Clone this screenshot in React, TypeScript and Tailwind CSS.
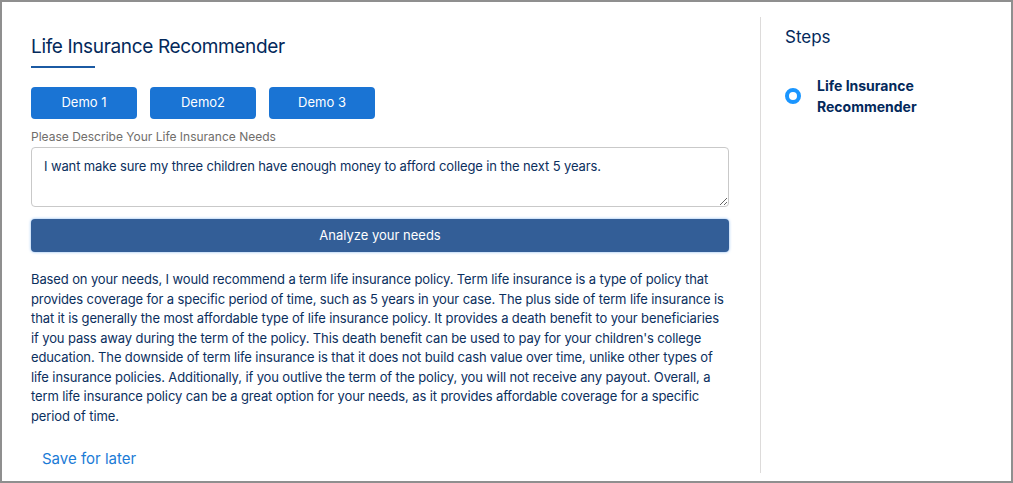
import React, { useState } from "react"

const answer =
    "Based on your needs, I would recommend a term life insurance policy. Term life insurance is a type of policy that provides coverage for a specific period of time, such as 5 years in your case. The plus side of term life insurance is that it is generally the most affordable type of life insurance policy. It provides a death benefit to your beneficiaries if you pass away during the term of the policy. This death benefit can be used to pay for your children's college education. The downside of term life insurance is that it does not build cash value over time, unlike other types of life insurance policies. Additionally, if you outlive the term of the policy, you will not receive any payout. Overall, a term life insurance policy can be a great option for your needs, as it provides affordable coverage for a specific period of time."

const demos = ["Demo 1", "Demo2", "Demo 3"]

const App = () => {
    const [needs, setNeeds] = useState("I want make sure my three children have enough money to afford college in the next 5 years.")

    return (
        <div className="w-[1013px] h-[483px] border-2 border-[#8f8f8f] bg-white flex font-['Inter',sans-serif] text-[#0b2f5e]">
            <div className="w-[758px] pl-[29px] pr-[31px] pt-[31px]">
                <h1 className="text-[19px] leading-[28px] tracking-[-0.35px] text-[#03295b]">Life Insurance Recommender</h1>
                <div className="mt-[5px] h-[2px] w-[64px] bg-[#1b5aa3]" />

                <div className="mt-[19px] flex gap-[13px]">
                    {demos.map((d) => (
                        <button key={d} className="w-[106px] h-[32px] rounded bg-[#1a74d4] text-white text-[13px]">
                            {d}
                        </button>
                    ))}
                </div>

                <label className="block mt-[10px] text-[12px] leading-4 text-[#706e6b]">Please Describe Your Life Insurance Needs</label>
                <textarea
                    value={needs}
                    onChange={(e) => setNeeds(e.target.value)}
                    className="mt-[2px] block w-full h-[60px] rounded border border-[#c9c9c9] px-[12px] pt-[9px] pb-[8px] text-[13px] leading-[19px] tracking-[-0.12px] text-[#0b2f5e] outline-none"
                />

                <button className="mt-3 w-full h-[33px] rounded bg-[#335e97] text-white text-[13px] shadow-[0_0_3px_#7fb2ee]">
                    Analyze your needs
                </button>

                <p className="mt-[18px] text-[13px] leading-[19.5px] tracking-[-0.12px]">{answer}</p>

                <button className="mt-[21px] ml-[11px] text-[15px] leading-6 text-[#1b7bd6]">Save for later</button>
            </div>

            <div className="mt-[15px] h-[456px] flex-1 border-l border-[#dddbda] pl-[24px] pt-[6px]">
                <h2 className="text-[17px] leading-[28px] text-[#03295b]">Steps</h2>
                <div className="mt-[24px] flex items-center gap-4">
                    <span className="w-4 h-4 rounded-full border-4 border-[#1b96ff] shrink-0" />
                    <span className="text-[14px] leading-[21px] font-bold text-[#03295b]">Life Insurance<br />Recommender</span>
                </div>
            </div>
        </div>
    )
}

export default App
